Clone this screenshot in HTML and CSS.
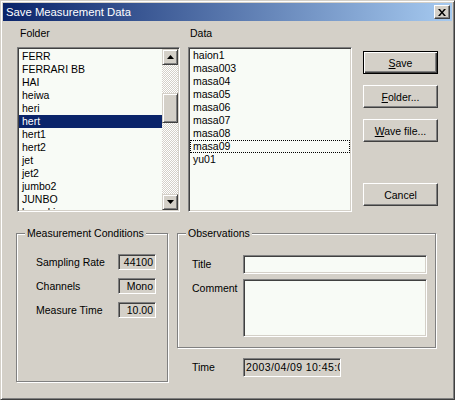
FILE: index.html
```html
<!DOCTYPE html>
<html lang="en">
<head>
  <meta charset="UTF-8">
  <title>Save Measurement Data</title>
  <link rel="stylesheet" href="styles.css">
</head>
<body>
  <div class="window">
    <div class="titlebar">
      <span class="title">Save Measurement Data</span>
      <span class="close-btn">
        <svg width="8" height="7" viewBox="0 0 8 7"><path d="M0 0h2l2 2.4L6 0h2L5 3.5 8 7H6L4 4.6 2 7H0l3-3.5z" fill="#000"/></svg>
      </span>
    </div>

    <div class="client">
      <div class="top-pane">
        <div class="folder-col">
          <div class="caption">Folder</div>
          <div class="listbox folder-list">
            <ul class="items">
              <li>FERR</li>
              <li>FERRARI BB</li>
              <li>HAI</li>
              <li>heiwa</li>
              <li>heri</li>
              <li class="selected">hert</li>
              <li>hert1</li>
              <li>hert2</li>
              <li>jet</li>
              <li>jet2</li>
              <li>jumbo2</li>
              <li>JUNBO</li>
              <li>kamaki</li>
            </ul>
            <div class="scrollbar">
              <span class="sb-btn"><svg width="7" height="4" viewBox="0 0 7 4"><path d="M3.5 0L7 4H0z" fill="#000"/></svg></span>
              <div class="sb-track">
                <span class="sb-thumb"></span>
              </div>
              <span class="sb-btn"><svg width="7" height="4" viewBox="0 0 7 4"><path d="M0 0h7L3.5 4z" fill="#000"/></svg></span>
            </div>
          </div>
        </div>

        <div class="data-col">
          <div class="caption">Data</div>
          <div class="listbox data-list">
            <ul class="items">
              <li>haion1</li>
              <li>masa003</li>
              <li>masa04</li>
              <li>masa05</li>
              <li>masa06</li>
              <li>masa07</li>
              <li>masa08</li>
              <li class="focused">masa09</li>
              <li>yu01</li>
            </ul>
          </div>
        </div>

        <div class="buttons">
          <button class="btn default"><u>S</u>ave</button>
          <button class="btn"><u>F</u>older...</button>
          <button class="btn"><u>W</u>ave file...</button>
          <button class="btn cancel">Cancel</button>
        </div>
      </div>

      <div class="bottom-pane">
        <div class="group cond">
          <div class="group-title">Measurement Conditions</div>
          <div class="cond-grid">
            <span>Sampling Rate</span><span class="field num">44100</span>
            <span>Channels</span><span class="field num">Mono</span>
            <span>Measure Time</span><span class="field num">10.00</span>
          </div>
        </div>

        <div class="right">
          <div class="group obs">
            <div class="group-title">Observations</div>
            <div class="obs-grid">
              <span class="lbl">Title</span><span class="edit title-edit"></span>
              <span class="lbl lbl-top">Comment</span><span class="edit memo"></span>
            </div>
          </div>
          <div class="time-row">
            <span class="lbl">Time</span><span class="field time">2003/04/09 10:45:00</span>
          </div>
        </div>
      </div>
    </div>
  </div>
</body>
</html>
```

FILE: styles.css
```css
body {
  margin: 0;
  font-family: "Liberation Sans", Arial, sans-serif;
  font-size: 10.5px;
  color: #000;
  background: #d4d0c8;
}
.window {
  width: 455px;
  height: 400px;
  box-sizing: border-box;
  background: #d4d0c8;
  border: 1px solid;
  border-color: #d4d0c8 #404040 #404040 #d4d0c8;
  box-shadow: inset 1px 1px #fff, inset -1px -1px #808080;
  padding: 2px;
  overflow: hidden;
}
.titlebar {
  height: 18px;
  display: flex;
  align-items: center;
  justify-content: space-between;
  padding: 0 2px 0 3px;
  background: linear-gradient(to right, #0a246a, #a6caf0);
}
.title {
  color: #fff;
  font-size: 11.3px;
  line-height: 18px;
}
.close-btn {
  width: 16px;
  height: 14px;
  box-sizing: border-box;
  display: flex;
  align-items: center;
  justify-content: center;
  background: #d4d0c8;
  border: 1px solid;
  border-color: #fff #404040 #404040 #fff;
  box-shadow: inset -1px -1px #808080;
}

/* top part */
.top-pane {
  display: flex;
  align-items: flex-start;
  padding: 6px 0 0 14px;
}
.caption {
  line-height: 13px;
  height: 13px;
  padding-left: 3px;
  margin-bottom: 7px;
}
.data-col .caption {
  padding-left: 2px;
}
.folder-col {
  width: 163px;
}
.data-col {
  width: 164px;
  margin-left: 8px;
}
.listbox {
  height: 165px;
  box-sizing: border-box;
  background: #f8fbf6;
  border: 1px solid;
  border-color: #808080 #fff #fff #808080;
  box-shadow: inset 1px 1px #404040, inset -1px -1px #d4d0c8;
  padding: 1px;
  display: flex;
  overflow: hidden;
}
.items {
  list-style: none;
  margin: 0;
  padding: 1px 0 0;
  flex: 1;
  overflow: hidden;
}
.items li {
  height: 13px;
  line-height: 13px;
  padding-left: 3px;
  white-space: nowrap;
}
.items li.selected {
  background: #0a246a;
  color: #fff;
}
.data-list .items {
  padding-top: 0;
}
.items li.focused {
  outline: 1px dotted #000;
  outline-offset: -1px;
}
.scrollbar {
  width: 16px;
  display: flex;
  flex-direction: column;
}
.sb-btn, .sb-thumb {
  height: 16px;
  box-sizing: border-box;
  background: #d4d0c8;
  border: 1px solid;
  border-color: #d4d0c8 #404040 #404040 #d4d0c8;
  box-shadow: inset 1px 1px #fff, inset -1px -1px #808080;
  display: flex;
  align-items: center;
  justify-content: center;
}
.sb-track {
  flex: 1;
  background: repeating-conic-gradient(#fff 0 25%, #d4d0c8 0 50%) 0 0 / 2px 2px;
  padding-top: 28px;
}
.sb-thumb {
  height: 30px;
}

.buttons {
  width: 75px;
  margin-left: 11px;
  padding-top: 24px;
  display: flex;
  flex-direction: column;
}
.btn {
  height: 23px;
  margin: 0 0 11px;
  padding: 0;
  font: inherit;
  color: #000;
  background: #d4d0c8;
  border: 1px solid;
  border-color: #fff #404040 #404040 #fff;
  box-shadow: inset -1px -1px #808080;
}
.btn.default {
  border-color: #000;
  box-shadow: inset 1px 1px #fff, inset -1px -1px #404040, inset -2px -2px #808080;
}
.btn.cancel {
  margin: 30px 0 0;
}

/* bottom part */
.bottom-pane {
  display: flex;
  align-items: flex-start;
  margin-top: 21px;
  padding-left: 13px;
}
.group {
  box-sizing: border-box;
  border: 1px solid #808080;
  box-shadow: inset 1px 1px #fff, 1px 1px #fff;
}
.group-title {
  width: fit-content;
  margin: -7px 0 0 8px;
  padding: 0 2px;
  line-height: 13px;
  background: #d4d0c8;
}
.cond {
  width: 152px;
  height: 149px;
}
.cond-grid {
  display: grid;
  grid-template-columns: 82px 38px;
  row-gap: 8px;
  align-items: center;
  margin: 14px 0 0 19px;
}
.field {
  height: 16px;
  line-height: 14px;
  box-sizing: border-box;
  background: #d4d0c8;
  border: 1px solid;
  border-color: #808080 #fff #fff #808080;
  box-shadow: inset 1px 1px #404040, inset -1px -1px #d4d0c8;
  padding: 0 2px 0 3px;
  white-space: nowrap;
  overflow: hidden;
}
.field.num {
  text-align: right;
}
.right {
  margin-left: 9px;
}
.obs {
  width: 259px;
  height: 115px;
}
.obs-grid {
  display: grid;
  grid-template-columns: 51px 184px;
  row-gap: 5px;
  align-items: center;
  margin: 15px 0 0 14px;
}
.lbl {
  line-height: 13px;
  white-space: nowrap;
}
.lbl-top {
  align-self: start;
  margin-top: 3px;
}
.edit {
  display: block;
  box-sizing: border-box;
  background: #f8fbf6;
  border: 1px solid;
  border-color: #808080 #fff #fff #808080;
  box-shadow: inset 1px 1px #404040, inset -1px -1px #d4d0c8;
}
.title-edit {
  height: 19px;
}
.memo {
  height: 58px;
}
.time-row {
  display: grid;
  grid-template-columns: 51px 98px;
  align-items: center;
  margin: 10px 0 0 15px;
}
.field.time {
  height: 19px;
  line-height: 17px;
  padding: 0 0 0 2px;
  letter-spacing: 0.4px;
}
```
